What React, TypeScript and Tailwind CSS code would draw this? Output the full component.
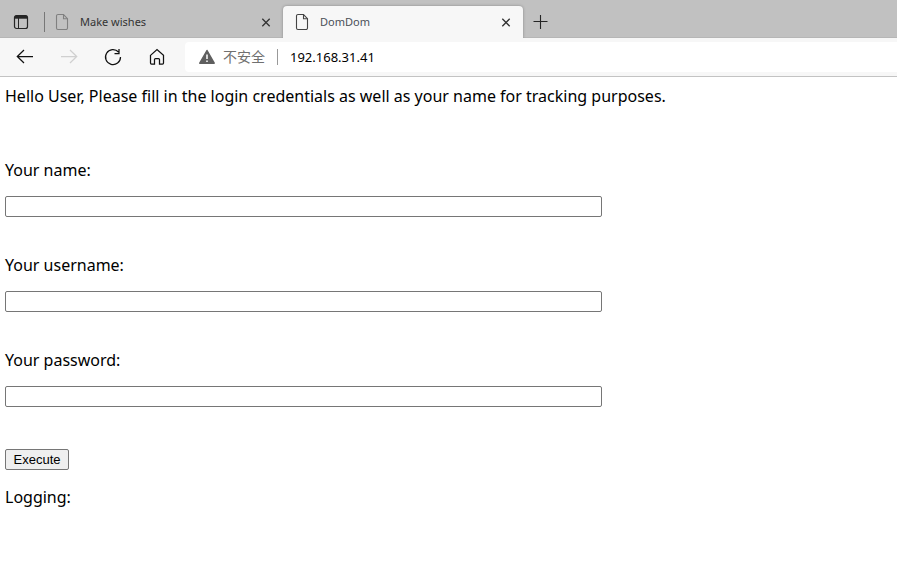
import type { ReactNode } from "react";

function PageIcon({ className }: { className: string }) {
  return (
    <svg className={`shrink-0 ${className}`} width="14" height="18" viewBox="0 0 14 18" fill="none" stroke="currentColor" strokeWidth="1.1" aria-hidden="true">
      <path d="M3 1.5h5.5l4 4.2V15A1.5 1.5 0 0 1 11 16.5H3A1.5 1.5 0 0 1 1.5 15V3A1.5 1.5 0 0 1 3 1.5z" />
      <path d="M8.5 1.5V5.7h4" />
    </svg>
  );
}

function CloseIcon() {
  return (
    <svg width="10" height="10" viewBox="0 0 10 10" stroke="#333" strokeWidth="1.3" aria-hidden="true">
      <path d="M1.3 1.8l7.4 7.4M8.7 1.8l-7.4 7.4" />
    </svg>
  );
}

function Tab({ title, active }: { title: string; active?: boolean }) {
  return (
    <div
      className={`flex h-8 w-60 shrink-0 items-center pl-3 ${
        active ? "relative rounded-t bg-[#f7f7f7] shadow-[0_0_3px_rgba(0,0,0,0.3)]" : ""
      }`}
    >
      <PageIcon className={active ? "text-[#444]" : "text-[#808080]"} />
      <span className={`ml-[11px] flex-1 text-[11px] ${active ? "text-[#4a4f58]" : "text-[#333]"}`}>{title}</span>
      <button type="button" aria-label={`Close ${title}`} className="mr-3 flex">
        <CloseIcon />
      </button>
    </div>
  );
}

function ToolButton({ label, disabled, children }: { label: string; disabled?: boolean; children: ReactNode }) {
  return (
    <button
      type="button"
      aria-label={label}
      disabled={disabled}
      className="flex size-5 shrink-0 items-center justify-center text-[#111] disabled:text-[#d0d0d0]"
    >
      <svg width="20" height="20" viewBox="0 0 20 20" fill="none" stroke="currentColor" strokeWidth="1.25" aria-hidden="true">
        {children}
      </svg>
    </button>
  );
}

function Field({ id, label, type = "text" }: { id: string; label: string; type?: string }) {
  return (
    <div className="flex flex-col gap-[15px]">
      <label htmlFor={id} className="leading-[21px]">
        {label}
      </label>
      <input id={id} type={type} className="h-[21px] w-full max-w-[597px] rounded-xs border border-[#767676] bg-white px-1 text-sm" />
    </div>
  );
}

export default function App() {
  return (
    <div className="min-h-screen overflow-x-hidden bg-white font-['Segoe_UI','Noto_Sans','Noto_Sans_CJK_SC',sans-serif] text-black">
      <header className="border-b border-[#c3c3c3] bg-[#f7f7f7]">
        <div className="flex h-[38px] items-end overflow-hidden bg-[#c1c1c1] shadow-[inset_0_-1px_0_#b6b6b6]">
          <button type="button" aria-label="Tab actions" className="ml-[13px] flex h-8 w-4 items-center">
            <svg width="16" height="16" viewBox="0 0 16 16" fill="none" stroke="#252525" aria-hidden="true">
              <rect x="1.5" y="1.5" width="13" height="13" rx="2" strokeWidth="1.2" />
              <path d="M2 3.2h12" strokeWidth="3" />
              <path d="M5.5 4v10" strokeWidth="1" />
            </svg>
          </button>
          <div className="mb-[6px] ml-[15px] h-5 w-px shrink-0 bg-[#777]" />
          <div className="-ml-[2px] flex">
            <Tab title="Make wishes" />
            <Tab title="DomDom" active />
          </div>
          <button type="button" aria-label="New tab" className="ml-[9px] flex h-8 items-center">
            <svg width="16" height="16" viewBox="0 0 16 16" stroke="#252525" strokeWidth="1.1" aria-hidden="true">
              <path d="M8.5 1v14M1.5 7.5h14" />
            </svg>
          </button>
        </div>
        <div className="flex h-[38px] items-center pl-[15px]">
          <div className="flex gap-6">
            <ToolButton label="Back">
              <path d="M18 9.5H2.5M9 3L2.3 9.5L9 16" />
            </ToolButton>
            <ToolButton label="Forward" disabled>
              <path d="M2 9.5h15.5M11 3l6.7 6.5L11 16" />
            </ToolButton>
            <ToolButton label="Refresh">
              <path d="M15.5 5A7.5 7.5 0 1 0 17.5 10M16 2v4.5h-4.5" />
            </ToolButton>
            <ToolButton label="Home">
              <path d="M3.5 8.4L10 2.5l6.5 5.9v7.6a1 1 0 0 1-1 1H12.5v-4.5a1 1 0 0 0-1-1h-3a1 1 0 0 0-1 1V17H4.5a1 1 0 0 1-1-1z" />
            </ToolButton>
          </div>
          <div className="ml-[18px] flex h-[30px] flex-1 items-center rounded-l bg-white pl-[13px] text-sm">
            <svg width="18" height="16" viewBox="0 0 18 16" className="shrink-0" aria-hidden="true">
              <path d="M9 1.5L16.2 14.2H1.8z" fill="#5f5f5f" stroke="#5f5f5f" strokeWidth="1.5" strokeLinejoin="round" />
              <path d="M9 5.5v4.5M9 11.5v1.6" stroke="#fff" strokeWidth="1.5" />
            </svg>
            <span className="ml-[7px] shrink-0 text-[#707070]">不安全</span>
            <div className="mx-3 h-4 w-px shrink-0 bg-[#999]" />
            <input aria-label="Address" defaultValue="192.168.31.41" className="min-w-0 flex-1 bg-transparent text-[13px]" />
          </div>
        </div>
      </header>
      <main className="px-[5px] pt-[9px] text-base">
        <p className="mb-[53px] leading-[21px]">
          Hello User, Please fill in the login credentials as well as your name for tracking purposes.
        </p>
        <form onSubmit={(event) => event.preventDefault()}>
          <div className="flex flex-col gap-[38px]">
            <Field id="name" label="Your name:" />
            <Field id="username" label="Your username:" />
            <Field id="password" label="Your password:" type="password" />
          </div>
          <button
            type="submit"
            className="mt-[42px] flex h-[21px] w-16 items-center justify-center rounded-xs border border-[#767676] bg-[#efefef] font-['Liberation_Sans',Arial,sans-serif] text-[13px]"
          >
            Execute
          </button>
        </form>
        <p className="mt-[17px] leading-[21px]">Logging:</p>
      </main>
    </div>
  );
}
